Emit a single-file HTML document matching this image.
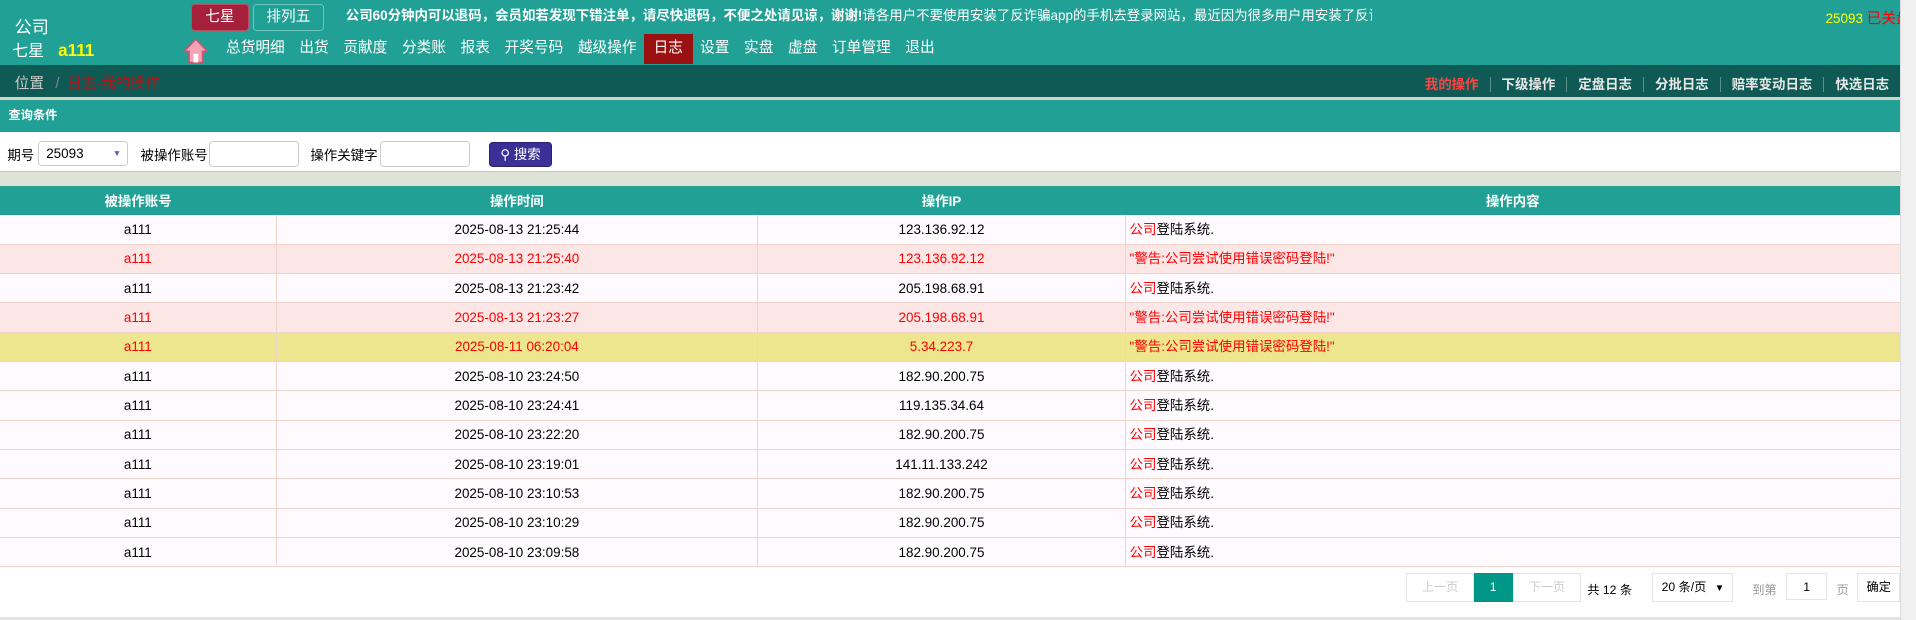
<!DOCTYPE html>
<html><head><meta charset="utf-8"><style>
*{box-sizing:border-box;margin:0;padding:0}
html,body{width:1916px;height:620px;overflow:hidden;background:#fff}
#w{zoom:1.22194;width:1568px;height:507px;position:relative;font-family:"Liberation Sans","Noto Sans CJK SC",sans-serif;font-size:11px;color:#000}
.a{position:absolute;white-space:nowrap}
#hdr{left:0;top:0;width:1555px;height:53px;background:#21a095}
.nav span{display:inline-block;color:#fff;font-size:12px;padding:0 6px;line-height:24px}
#bc{left:0;top:53px;width:1555px;height:26px;background:#0f5a54}
.rl span{color:#e8e8e8;font-weight:bold;font-size:11px;padding:0 9px;border-left:1px solid #5f8f8a}
table{position:absolute;left:0;top:152px;width:1555px;border-collapse:collapse}
th{background:#21a095;color:#fff;height:24px;font-size:11px;font-weight:bold}
td{height:24px;text-align:center;border-bottom:1px solid #f0d4cc;border-right:1px solid #f0d4cc;font-size:11px;background:#fffafe;line-height:14px}
td:last-child{text-align:left;padding-left:3px;border-right:none}
tr.r td{background:#fde6e6;color:#f00}
tr.y td{background:#eee68e;color:#f00}
.k{color:#f00}
.pg{position:absolute;top:469px;height:24px;border:1px solid #e4e4e4;text-align:center;line-height:22px;font-size:10px;background:#fff}
</style></head><body><div id="w">
<div class="a" id="hdr"></div>
<div class="a" style="left:12px;top:11px;color:#fff;font-size:14px">公司</div>
<div class="a" style="left:10px;top:31px;color:#fff;font-size:13px">七星 <b style="color:#ff0;margin-left:8px;font-size:14px">a111</b></div>
<div class="a" style="left:156px;top:3px;width:48px;height:22px;background:#a4203b;border:1px solid #c04b5f;border-radius:3px;color:#fff;font-size:12px;text-align:center;line-height:20px">七星</div>
<div class="a" style="left:207px;top:3px;width:58px;height:22px;border:1px solid #6cc6bd;border-radius:3px;color:#fff;font-size:12px;text-align:center;line-height:20px">排列五</div>
<div class="a" style="left:283px;top:6px;width:840px;overflow:hidden;color:#fff;font-size:11px;line-height:14px"><b>公司60分钟内可以退码，会员如若发现下错注单，请尽快退码，不便之处请见谅，谢谢!</b>请各用户不要使用安装了反诈骗app的手机去登录网站，最近因为很多用户用安装了反诈骗app</div>
<div class="a" style="left:1494px;top:6px;font-size:11px;color:#ff0">25093 <span style="color:#f00;font-size:12px">已关盘</span></div>
<svg class="a" style="left:150px;top:31px" width="21" height="21" viewBox="0 0 21 21"><path d="M10.5 1 L1 11 H5 V20 H16 V11 H20 Z" fill="#f4a3b6" stroke="#d2546f" stroke-width="1.3"/><rect x="8.5" y="13" width="4" height="7" fill="#fff"/></svg>
<div class="a nav" style="left:179px;top:28px"><span>总货明细</span><span>出货</span><span>贡献度</span><span>分类账</span><span>报表</span><span>开奖号码</span><span>越级操作</span><span style="background:#9b1111;padding:0 8px">日志</span><span>设置</span><span>实盘</span><span>虚盘</span><span>订单管理</span><span>退出</span></div>
<div class="a" id="bc"></div>
<div class="a" style="left:12px;top:59px;font-size:12px;color:#ccc">位置 <span style="color:#888;margin:0 6px">/</span><span style="color:#b01818">日志-我的操作</span></div>
<div class="a rl" style="left:1157px;top:60px"><span style="color:#f44;border:none">我的操作</span><span>下级操作</span><span>定盘日志</span><span>分批日志</span><span>赔率变动日志</span><span>快选日志</span></div>
<div class="a" style="left:0;top:79px;width:1555px;height:3px;background:#d6d3bf"></div>
<div class="a" style="left:0;top:82px;width:1555px;height:26px;background:#21a095;color:#fff;font-weight:bold;font-size:10px;line-height:26px;padding-left:7px">查询条件</div>
<div class="a" style="left:6px;top:118px;font-size:11px">期号</div>
<div class="a" style="left:31px;top:115px;width:74px;height:21px;border:1px solid #ccc;border-radius:3px;padding-left:6px;line-height:19px;font-size:11px">25093<span style="position:absolute;right:5px;top:0;color:#6a5ab8;font-size:7px">▼</span></div>
<div class="a" style="left:115px;top:118px">被操作账号</div>
<div class="a" style="left:171px;top:115px;width:74px;height:22px;border:1px solid #ccc;border-radius:3px"></div>
<div class="a" style="left:254px;top:118px">操作关键字</div>
<div class="a" style="left:311px;top:115px;width:74px;height:22px;border:1px solid #ccc;border-radius:3px"></div>
<div class="a" style="left:400px;top:116px;width:52px;height:21px;background:#3b2f98;border:1px solid #2a2070;border-radius:3px;color:#fff;text-align:center;line-height:19px;font-size:11px">⚲ 搜索</div>
<div class="a" style="left:0;top:140px;width:1555px;height:12px;background:#dfe3d6;border-top:1px solid #c8c8b0"></div>
<table>
<tr><th style="width:226px">被操作账号</th><th style="width:394px">操作时间</th><th style="width:301px">操作IP</th><th>操作内容</th></tr>
<tr><td>a111</td><td>2025-08-13 21:25:44</td><td>123.136.92.12</td><td><span class="k">公司</span>登陆系统.</td></tr>
<tr class="r"><td>a111</td><td>2025-08-13 21:25:40</td><td>123.136.92.12</td><td>"警告:公司尝试使用错误密码登陆!"</td></tr>
<tr><td>a111</td><td>2025-08-13 21:23:42</td><td>205.198.68.91</td><td><span class="k">公司</span>登陆系统.</td></tr>
<tr class="r"><td>a111</td><td>2025-08-13 21:23:27</td><td>205.198.68.91</td><td>"警告:公司尝试使用错误密码登陆!"</td></tr>
<tr class="y"><td>a111</td><td>2025-08-11 06:20:04</td><td>5.34.223.7</td><td>"警告:公司尝试使用错误密码登陆!"</td></tr>
<tr><td>a111</td><td>2025-08-10 23:24:50</td><td>182.90.200.75</td><td><span class="k">公司</span>登陆系统.</td></tr>
<tr><td>a111</td><td>2025-08-10 23:24:41</td><td>119.135.34.64</td><td><span class="k">公司</span>登陆系统.</td></tr>
<tr><td>a111</td><td>2025-08-10 23:22:20</td><td>182.90.200.75</td><td><span class="k">公司</span>登陆系统.</td></tr>
<tr><td>a111</td><td>2025-08-10 23:19:01</td><td>141.11.133.242</td><td><span class="k">公司</span>登陆系统.</td></tr>
<tr><td>a111</td><td>2025-08-10 23:10:53</td><td>182.90.200.75</td><td><span class="k">公司</span>登陆系统.</td></tr>
<tr><td>a111</td><td>2025-08-10 23:10:29</td><td>182.90.200.75</td><td><span class="k">公司</span>登陆系统.</td></tr>
<tr><td>a111</td><td>2025-08-10 23:09:58</td><td>182.90.200.75</td><td><span class="k">公司</span>登陆系统.</td></tr>
</table>
<div class="pg" style="left:1151px;width:55px;color:#ccc">上一页</div>
<div class="pg" style="left:1206px;width:32px;background:#009688;border-color:#009688;color:#fff">1</div>
<div class="pg" style="left:1238px;width:56px;color:#ccc">下一页</div>
<div class="a" style="left:1299px;top:475px;font-size:10px">共 12 条</div>
<div class="pg" style="left:1352px;width:66px;text-align:left;padding-left:7px">20 条/页 <span style="font-size:8px;margin-left:4px">▼</span></div>
<div class="a" style="left:1434px;top:475px;font-size:10px;color:#999">到第</div>
<div class="pg" style="left:1462px;width:33px;top:469px;height:22px">1</div>
<div class="a" style="left:1503px;top:475px;font-size:10px;color:#999">页</div>
<div class="pg" style="left:1520px;width:35px">确定</div>
<div class="a" style="left:0;top:505px;width:1555px;height:2px;background:#e4e4e4"></div>
<div class="a" style="left:1555px;top:0;width:13px;height:507px;background:#f0f0f0;border-left:1px solid #ddd"></div>
</div></body></html>
